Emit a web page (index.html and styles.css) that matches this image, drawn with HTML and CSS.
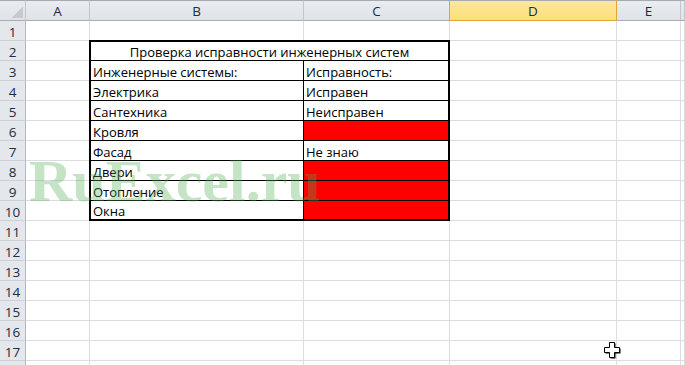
FILE: index.html
```html
<!DOCTYPE html>
<html lang="ru">
<head>
<meta charset="utf-8">
<title>RuExcel</title>
<link rel="stylesheet" href="styles.css">
</head>
<body>
<div class="sheet">
  <div class="ch corner"></div>
  <div class="ch">A</div>
  <div class="ch">B</div>
  <div class="ch pre-sel">C</div>
  <div class="ch sel">D</div>
  <div class="ch">E</div>
  <div class="ch"></div>

  <div class="rh">1</div><div class="c"></div><div class="c"></div><div class="c"></div><div class="c"></div><div class="c"></div><div class="c"></div>
  <div class="rh">2</div><div class="c"></div><div class="c"></div><div class="c"></div><div class="c"></div>
  <div class="rh">3</div><div class="c"></div><div class="c"></div><div class="c"></div><div class="c"></div>
  <div class="rh">4</div><div class="c"></div><div class="c"></div><div class="c"></div><div class="c"></div>
  <div class="rh">5</div><div class="c"></div><div class="c"></div><div class="c"></div><div class="c"></div>
  <div class="rh">6</div><div class="c"></div><div class="c"></div><div class="c"></div><div class="c"></div>
  <div class="rh">7</div><div class="c"></div><div class="c"></div><div class="c"></div><div class="c"></div>
  <div class="rh">8</div><div class="c"></div><div class="c"></div><div class="c"></div><div class="c"></div>
  <div class="rh">9</div><div class="c"></div><div class="c"></div><div class="c"></div><div class="c"></div>
  <div class="rh">10</div><div class="c"></div><div class="c"></div><div class="c"></div><div class="c"></div>
  <div class="rh">11</div><div class="c"></div><div class="c"></div><div class="c"></div><div class="c"></div><div class="c"></div><div class="c"></div>
  <div class="rh">12</div><div class="c"></div><div class="c"></div><div class="c"></div><div class="c"></div><div class="c"></div><div class="c"></div>
  <div class="rh">13</div><div class="c"></div><div class="c"></div><div class="c"></div><div class="c"></div><div class="c"></div><div class="c"></div>
  <div class="rh">14</div><div class="c"></div><div class="c"></div><div class="c"></div><div class="c"></div><div class="c"></div><div class="c"></div>
  <div class="rh">15</div><div class="c"></div><div class="c"></div><div class="c"></div><div class="c"></div><div class="c"></div><div class="c"></div>
  <div class="rh">16</div><div class="c"></div><div class="c"></div><div class="c"></div><div class="c"></div><div class="c"></div><div class="c"></div>
  <div class="rh">17</div><div class="c"></div><div class="c"></div><div class="c"></div><div class="c"></div><div class="c"></div><div class="c"></div>
  <div class="rh"></div><div class="c"></div><div class="c"></div><div class="c"></div><div class="c"></div><div class="c"></div><div class="c"></div>

  <div class="tbl">
    <div class="t title">Проверка исправности инженерных систем</div>
    <div class="t b">Инженерные системы:</div><div class="t">Исправность:</div>
    <div class="t b">Электрика</div><div class="t">Исправен</div>
    <div class="t b">Сантехника</div><div class="t">Неисправен</div>
    <div class="t b">Кровля</div><div class="t red"></div>
    <div class="t b">Фасад</div><div class="t">Не знаю</div>
    <div class="t b">Двери</div><div class="t red"></div>
    <div class="t b">Отопление</div><div class="t red"></div>
    <div class="t b last">Окна</div><div class="t red last"></div>
  </div>
</div>

<div class="wm">RuExcel.ru</div>

<svg class="cursor" width="18" height="18" viewBox="0 0 18 18">
  <path d="M6.5 1.5h5v5h5v5h-5v5h-5v-5h-5v-5h5z" fill="#000" transform="translate(1 1)"/>
  <path d="M6.5 1.5h5v5h5v5h-5v5h-5v-5h-5v-5h5z" fill="#fff" stroke="#000" stroke-width="1"/>
</svg>
</body>
</html>
```

FILE: styles.css
```css
* {
  box-sizing: border-box;
}

html,
body {
  margin: 0;
  height: 100%;
}

body {
  position: relative;
  overflow: hidden;
  background: #fff;
  color: #000;
  font-family: "Open Sans", "Noto Sans", sans-serif;
  font-size: 13px;
}

.sheet {
  display: grid;
  grid-template-columns: 26px 64px 214px 146px 167px 64px 1fr;
  grid-template-rows: 21px repeat(18, 20px);
}

.ch {
  display: flex;
  align-items: center;
  justify-content: center;
  background: linear-gradient(#e9ecf0, #dfe3e8);
  border-top: 1px solid #a7abb0;
  border-bottom: 1px solid #a9adb3;
  border-right: 1px solid #c3c7cd;
  color: #1d2c42;
  font-size: 13.5px;
  padding-top: 1px;
}

.corner {
  background:
    linear-gradient(135deg, transparent 50%, #c5cad0 50%) right 2px bottom 2px / 11px 11px no-repeat,
    linear-gradient(#e9ecf0, #dfe3e8);
}

.pre-sel {
  border-right-color: #e3a23c;
}

.sel {
  background: linear-gradient(#fde7a0, #fddf78);
  border-right-color: #e3a23c;
  border-bottom-color: #e3a23c;
}

.rh {
  display: flex;
  align-items: center;
  justify-content: center;
  background: #e4e7ec;
  border-right: 1px solid #b4b8be;
  border-bottom: 1px solid #cdd1d6;
  color: #1d2c42;
  font-size: 13.5px;
  padding-top: 2px;
}

.c {
  border-right: 1px solid #dadcdd;
  border-bottom: 1px solid #dadcdd;
}

.tbl {
  grid-column: 3 / 5;
  grid-row: 3 / 12;
  margin: -1px 0 0 -1px;
  display: grid;
  grid-template-columns: 213px 1fr;
  grid-template-rows: 19px repeat(7, 20px) 1fr;
  border: 2px solid #000;
  background: #fff;
}

.t {
  display: flex;
  align-items: flex-end;
  padding: 0 2px;
  border-bottom: 1px solid #000;
  line-height: 15px;
  white-space: nowrap;
}

.t.b {
  border-right: 1px solid #000;
}

.t.title {
  grid-column: 1 / 3;
  justify-content: center;
}

.t.last {
  border-bottom: none;
}

.red {
  background: #ff0000;
}

.wm {
  position: absolute;
  left: 29px;
  top: 151px;
  font-family: "Liberation Serif", serif;
  font-weight: bold;
  font-size: 60px;
  line-height: 1;
  color: rgba(80, 170, 80, 0.33);
  pointer-events: none;
  white-space: nowrap;
}

.cursor {
  position: absolute;
  left: 603px;
  top: 341px;
}
```
